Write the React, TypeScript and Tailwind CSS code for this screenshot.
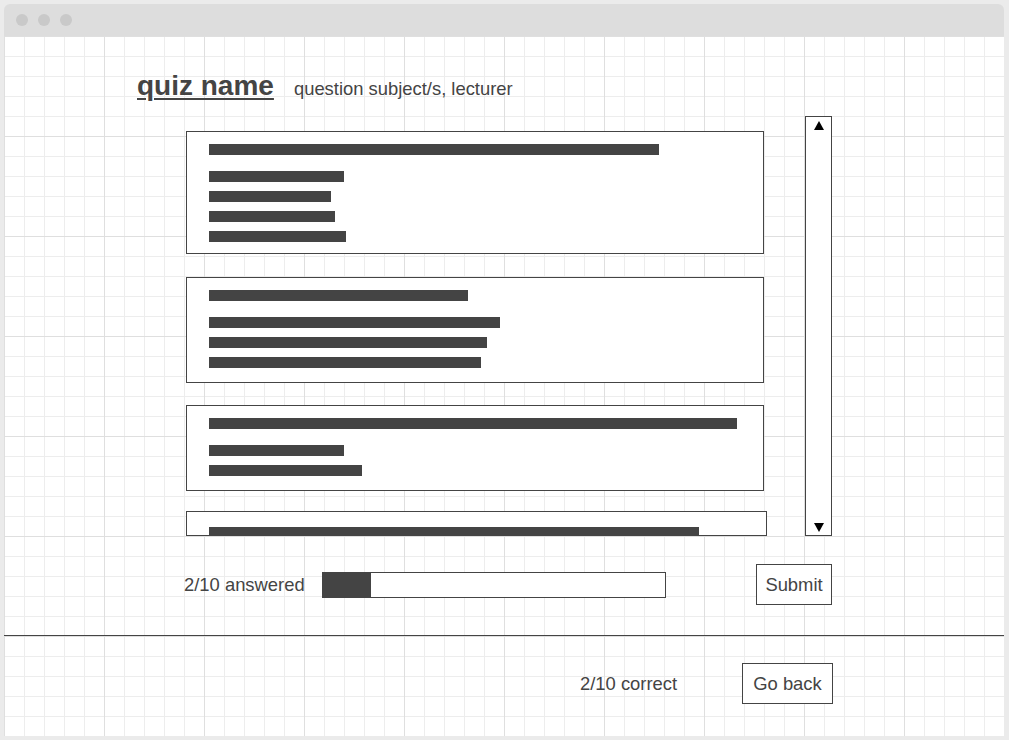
import React from "react";

const questions = [
    { id: 1, h: "h-[123px]", q: 450, opts: [135, 122, 126, 137] },
    { id: 2, h: "h-[106px]", q: 259, opts: [291, 278, 272] },
    { id: 3, h: "h-[86px]", q: 528, opts: [135, 153] },
];

function Bar(props: { w: number; className?: string }) {
    // bar width comes from data
    return <div className={"h-[11px] bg-[#444444] " + (props.className || "")} style={{ width: props.w }} />;
}

function QuestionCard(props: { q: (typeof questions)[number]; className?: string }) {
    const q = props.q;
    return (
        <div className={"w-[578px] border border-[#444444] bg-white pt-[12px] pl-[22px] " + q.h + " " + (props.className || "")}>
            <Bar w={q.q} />
            <div className="mt-[16px] flex flex-col gap-[9px]">
                {q.opts.map((w, i) => (
                    <Bar key={i} w={w} />
                ))}
            </div>
        </div>
    );
}

export default function App() {
    return (
        <div className="w-[1009px] h-[740px] bg-[#ebebeb] pt-[4px] pl-[4px] font-['Liberation_Sans',Arial,sans-serif] text-[#444444]">
            <div className="w-[1000px] rounded-t-[6px] overflow-hidden">
                {/* title bar */}
                <div className="h-[32px] bg-[#dddddd] flex items-center gap-[10px] pl-[12px]">
                    <div className="w-[12px] h-[12px] rounded-full bg-[#c9c9c9]" />
                    <div className="w-[12px] h-[12px] rounded-full bg-[#c9c9c9]" />
                    <div className="w-[12px] h-[12px] rounded-full bg-[#c9c9c9]" />
                </div>

                {/* canvas */}
                <div className="h-[700px] bg-white [background-image:linear-gradient(to_right,#dfdfdf_1px,transparent_1px),linear-gradient(to_bottom,#dfdfdf_1px,transparent_1px),linear-gradient(to_right,#ededed_1px,transparent_1px),linear-gradient(to_bottom,#ededed_1px,transparent_1px)] [background-size:100px_100px,100px_100px,20px_20px,20px_20px]">
                    <div className="pt-[36px] ml-[133px] flex items-baseline gap-[20px]">
                        <span className="text-[28px] leading-[28px] font-bold underline underline-offset-[3px] decoration-[2px]">quiz name</span>
                        <span className="text-[18.4px] leading-[28px]">question subject/s, lecturer</span>
                    </div>

                    <div className="mt-[13px] ml-[182px] flex items-start">
                        <div className="pt-[15px] w-[581px]">
                            <QuestionCard q={questions[0]} />
                            <QuestionCard q={questions[1]} className="mt-[23px]" />
                            <QuestionCard q={questions[2]} className="mt-[22px]" />
                            <div className="mt-[20px] w-[581px] h-[25px] border border-[#444444] bg-white overflow-hidden pt-[15px] pl-[22px]">
                                <Bar w={490} />
                            </div>
                        </div>
                        <div className="ml-[38px] w-[27px] h-[420px] border border-[#444444] bg-white flex flex-col justify-between items-center pt-[4px] pb-[3px]">
                            <svg width="10" height="9" viewBox="0 0 10 9">
                                <polygon points="5,0 10,9 0,9" fill="#000" />
                            </svg>
                            <svg width="10" height="9" viewBox="0 0 10 9">
                                <polygon points="0,0 10,0 5,9" fill="#000" />
                            </svg>
                        </div>
                    </div>

                    <div className="mt-[28px] ml-[180px] flex items-center">
                        <span className="text-[18.4px] w-[122px]">2/10 answered</span>
                        <div className="ml-[16px] w-[344px] h-[26px] border border-[#444444] bg-white">
                            <div className="w-[48px] h-full bg-[#444444]" />
                        </div>
                        <div className="ml-[90px] w-[76px] h-[41px] border border-[#444444] bg-white flex items-center justify-center text-[18.4px]">
                            Submit
                        </div>
                    </div>

                    <div className="mt-[30px] border-t border-[#444444]" />

                    <div className="mt-[27px] ml-[576px] flex items-center">
                        <span className="text-[18.4px] w-[99px]">2/10 correct</span>
                        <div className="ml-[63px] w-[91px] h-[41px] border border-[#444444] bg-white flex items-center justify-center text-[18.4px]">
                            Go back
                        </div>
                    </div>
                </div>
            </div>
        </div>
    );
}
